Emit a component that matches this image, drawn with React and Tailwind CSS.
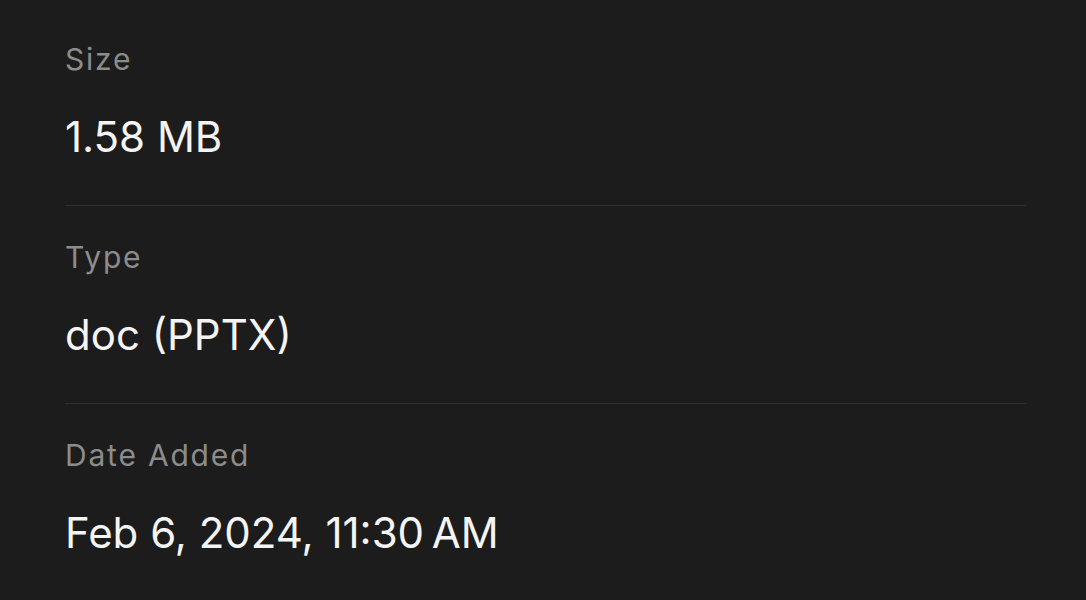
import React from "react";

const rows = [
  { label: "Size", value: "1.58 MB" },
  { label: "Type", value: "doc (PPTX)" },
  { label: "Date Added", value: "Feb 6, 2024, 11:30\u202FAM" },
];

const App = () => {
  return (
    <div
      className="w-[1086px] h-[600px] bg-[#1c1c1c] pl-[65px] pr-[60px] pt-[8px] overflow-hidden"
      style={{ fontFamily: "Inter, 'Noto Sans', sans-serif" }}
    >
      {rows.map((row, i) => (
        <div
          key={row.label}
          className={`pt-[33px] pb-[44px] ${
            i < rows.length - 1 ? "border-b border-[#2f2f2f]" : ""
          }`}
        >
          <div className="text-[30px] leading-[36px] text-[#8c8c8c] tracking-[0.06em]">
            {row.label}
          </div>
          <div className="mt-[36px] text-[42px] leading-[48px] text-[#f4f4f4]">
            {row.value}
          </div>
        </div>
      ))}
    </div>
  );
};

export default App;
